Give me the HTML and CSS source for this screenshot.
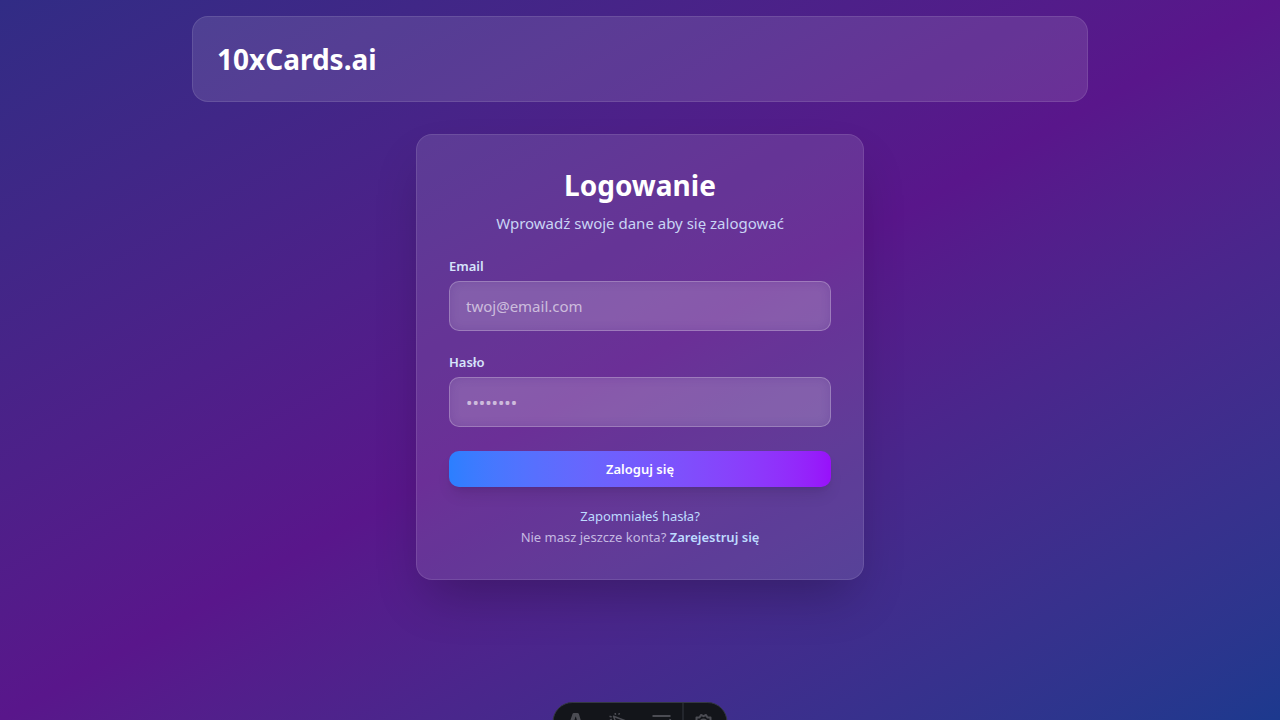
FILE: index.html
```
<!DOCTYPE html>
<html lang="pl">
<head>
<meta charset="utf-8">
<meta name="viewport" content="width=device-width, initial-scale=1">
<title>Logowanie</title>
<link rel="stylesheet" href="styles.css">
</head>
<body>
<div class="page">
  <header class="topbar glass">
    <div class="brand">10xCards.ai</div>
  </header>
  <main class="card glass">
    <div class="intro">
      <h1 class="title">Logowanie</h1>
      <p class="subtitle">Wprowadź swoje dane aby się zalogować</p>
    </div>
    <form class="form">
      <div class="field">
        <label class="label" for="email">Email</label>
        <input class="input" id="email" type="email" placeholder="twoj@email.com">
      </div>
      <div class="field">
        <label class="label" for="password">Hasło</label>
        <input class="input secret" id="password" type="password" placeholder="••••••••">
      </div>
      <button class="submit" type="submit">Zaloguj się</button>
    </form>
    <div class="links">
      <a class="link" href="#reset">Zapomniałeś hasła?</a>
      <p class="signup">Nie masz jeszcze konta? <a class="link strong" href="#register">Zarejestruj się</a></p>
    </div>
  </main>
</div>
<div class="toolbar">
  <button class="tool" type="button" aria-label="Menu"><svg width="16" height="20" viewBox="0 0 16 20"><path fill="currentColor" d="M1 12.700 5 1.100Q5.300 0 6.400 0H10Q11 0 11.400 1.100L15 12.700Q13 11.800 10.600 11.400L8.500 3.900Q8.200 3.300 7.900 3.900L5.600 11.400Q3 11.800 1 12.700zM5 13Q8 15 11 13 11 16 8 18 5 16 5 13z"/></svg></button>
  <button class="tool" type="button" aria-label="Inspect"><svg width="20" height="20" viewBox="0 0 20 20" fill="none" stroke="currentColor" stroke-width="1.500" stroke-linejoin="round"><path d="M5 3.200 17.500 8 12.500 11 10 16zM7 1.800 6.700 0M10.200 1.800 11 0M3.200 4 1 3.200M3.200 6.200 1.500 7.400"/></svg></button>
  <button class="tool" type="button" aria-label="Audit"><svg width="20" height="20" viewBox="0 0 20 20" fill="none" stroke="currentColor" stroke-width="2"><path d="M1 3H19M1 9H11M1 15H8M12 13 15 16 19 6"/></svg></button>
  <button class="tool settings" type="button" aria-label="Settings"><svg width="20" height="20" viewBox="0 0 20 20" fill="none" stroke="currentColor" stroke-width="2" stroke-linejoin="round"><path d="M7.500 2 10 3.200 12.500 2 14 4.500 17 4.600V7.500L19 10 17 12.500V15.400L14 15.500 12.500 18 10 16.800 7.500 18 6 15.500 3 15.400V12.500L1 10 3 7.500V4.600L6 4.500z"/><circle cx="10" cy="10" r="3.500"/></svg></button>
</div>
</body>
</html>
```
FILE: styles.css
```
* { box-sizing: border-box; }

body {
  margin: 0;
  min-height: 100vh;
  font-family: "Segoe UI", "Noto Sans", sans-serif;
  font-size: 15px;
  line-height: 24px;
  color: #fff;
  background: linear-gradient(to bottom right in oklab, #312c85, #59168b, #1c398e) fixed;
}

.page {
  display: flex;
  flex-direction: column;
  align-items: center;
  gap: 32px;
  padding: 16px;
}

.glass {
  width: 100%;
  border: 1px solid rgb(255 255 255 / 0.1);
  border-radius: 16px;
  background: rgb(255 255 255 / 0.11);
}

.topbar {
  max-width: 896px;
  padding: 24px;
}

.brand,
.title {
  margin: 0;
  font-size: 28px;
  font-weight: 700;
  line-height: 36px;
}

.card {
  max-width: 448px;
  padding: 32px;
  box-shadow: 0 25px 50px -12px rgb(0 0 0 / 0.25);
}

.intro {
  display: flex;
  flex-direction: column;
  gap: 8px;
  margin-bottom: 24px;
  text-align: center;
}

.subtitle {
  margin: 0;
  line-height: 24px;
  color: #c9d4f4;
}

.form {
  display: flex;
  flex-direction: column;
  gap: 24px;
}

.field {
  display: flex;
  flex-direction: column;
  gap: 8px;
}

.label {
  font-size: 13px;
  font-weight: 600;
  line-height: 14px;
  color: #d6e4fb;
}

.input {
  width: 100%;
  height: 50px;
  padding: 12px 16px;
  border: 1px solid rgb(255 255 255 / 0.2);
  border-radius: 10px;
  background: rgb(255 255 255 / 0.2);
  box-shadow: inset 0 0 10px rgb(60 20 120 / 0.18);
  font: inherit;
  line-height: 24px;
  color: #fff;
}

.secret { font-size: 17px; }

.input::placeholder {
  color: rgb(255 255 255 / 0.6);
}

.submit {
  height: 36px;
  padding: 8px 16px;
  border: 0;
  border-radius: 10px;
  background: linear-gradient(to right in oklab, #2b7fff, #9810fa);
  box-shadow: 0 10px 15px -3px rgb(0 0 0 / 0.1), 0 4px 6px -4px rgb(0 0 0 / 0.1);
  font: inherit;
  font-size: 13px;
  font-weight: 600;
  line-height: 20px;
  color: #fff;
}

.links {
  display: flex;
  flex-direction: column;
  align-items: center;
  gap: 1px;
  margin-top: 19px;
  font-size: 13px;
  line-height: 20px;
  text-align: center;
}

.link {
  color: #bedbff;
  text-decoration: none;
}

.strong { font-weight: 600; }

.signup {
  margin: 0;
  color: #c5b9e2;
}

.toolbar {
  position: fixed;
  bottom: -22px;
  left: 50%;
  display: flex;
  height: 40px;
  overflow: hidden;
  border: 1px solid #343841;
  border-radius: 20px;
  background: #13151a;
  transform: translateX(-50%);
}

.tool {
  display: flex;
  justify-content: center;
  width: 43px;
  padding: 10px 0 0;
  border: 0;
  background: none;
  color: #4b4c53;
}

.settings {
  width: 44px;
  padding-right: 4px;
  border-left: 1px solid #343841;
}
```
